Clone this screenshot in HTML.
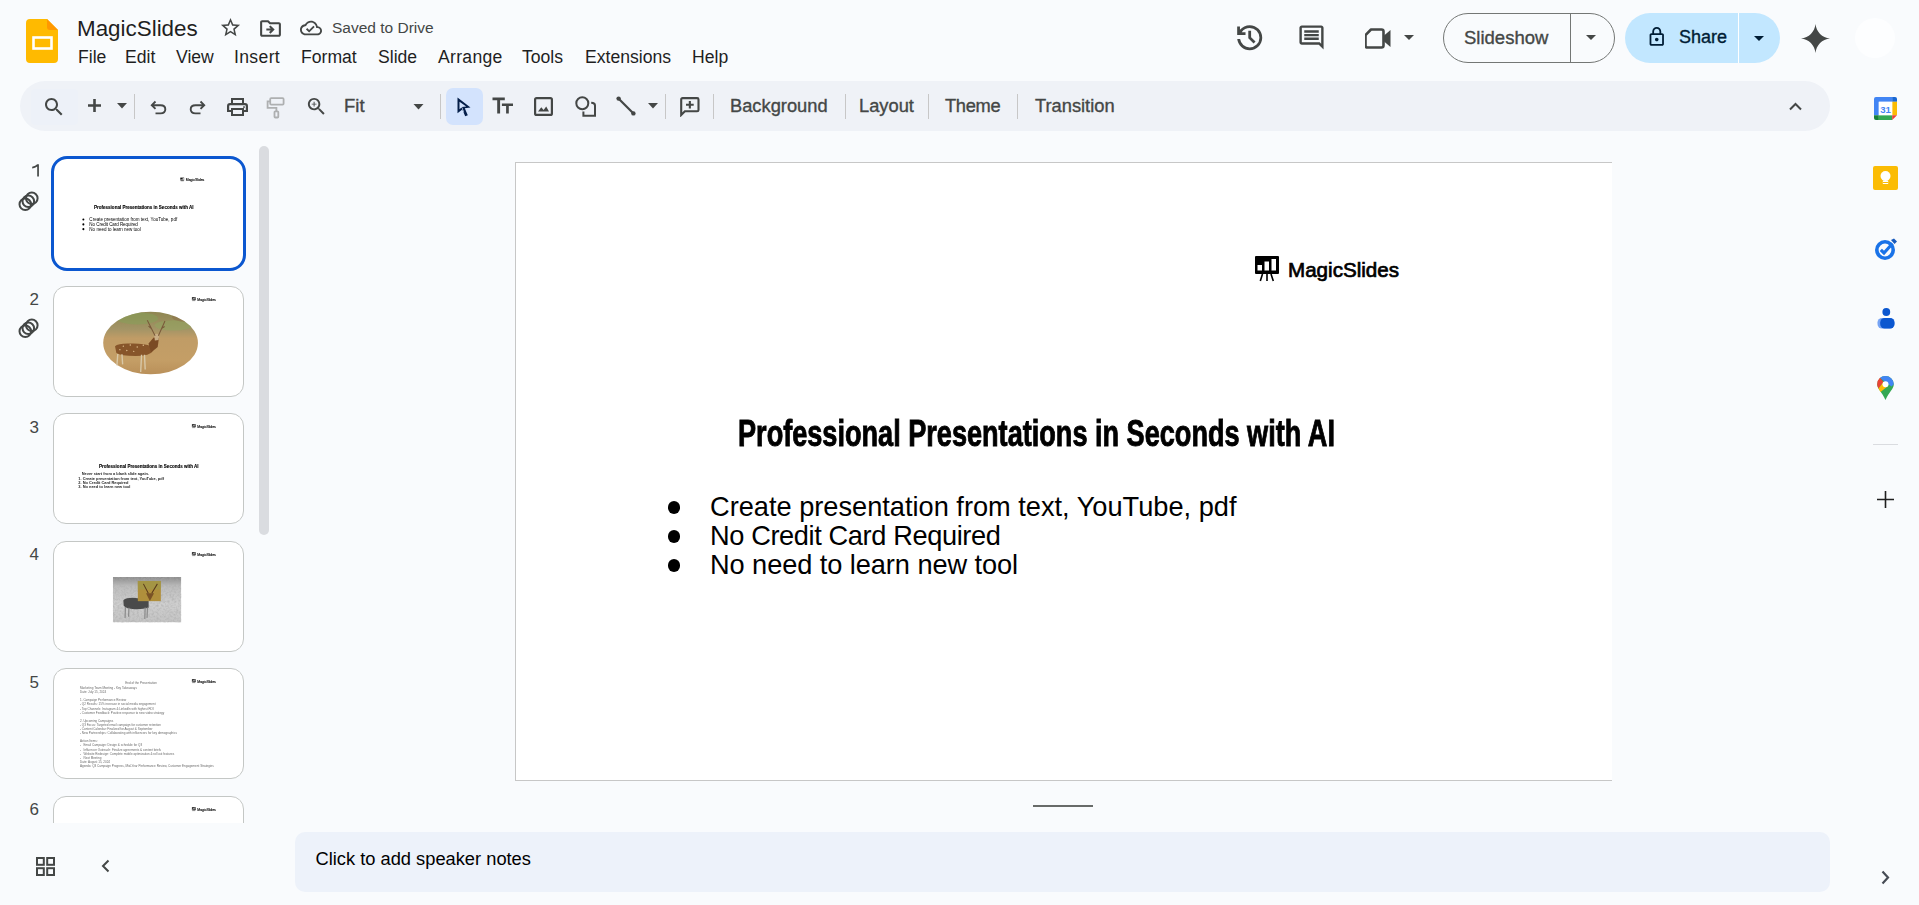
<!DOCTYPE html>
<html><head><meta charset="utf-8">
<style>
*{box-sizing:border-box;margin:0;padding:0}
html,body{width:1919px;height:905px;overflow:hidden;background:#f9fbfd;font-family:"Liberation Sans",sans-serif;color:#1f1f1f}
.a{position:absolute}
.ic{position:absolute;display:block}
.t{position:absolute;white-space:nowrap;line-height:1}
.menu{font-size:17.6px;color:#1f1f1f;margin-top:1px}
.tb{font-size:18.3px;color:#444746;-webkit-text-stroke:0.35px #444746}
.sep{position:absolute;width:1px;background:#c7c7c7}

.num{position:absolute;margin-top:-1.8px;font-size:17px;color:#444746;line-height:1;width:20px;text-align:right}
.thumb{position:absolute;left:53px;width:191px;height:111px;border:1px solid #c4c7c5;border-radius:13px;background:#fff;overflow:hidden}
.slide{position:absolute;left:0;top:0;width:1096px;height:617px;background:#fff;overflow:hidden}
.sc{transform-origin:0 0;transform:scale(0.1668);left:3px;top:3px}
.ttl{position:absolute;left:222px;top:252.7px;font-weight:bold;font-size:36.6px;line-height:1;white-space:nowrap;transform:scaleX(0.741);transform-origin:0 0;color:#000;-webkit-text-stroke:0.9px #000}
.bul{position:absolute;left:150px;top:329px;font-size:27.2px;line-height:29.2px;color:#000;white-space:nowrap}
.bul div{position:relative;padding-left:44px}
.bul div:before{content:"";position:absolute;left:1.5px;top:9px;width:12.5px;height:12.5px;border-radius:50%;background:#000}
.logo{position:absolute;left:738px;top:92px}
.trn{position:absolute;left:18px}
</style></head>
<body>
<!-- ===== HEADER ===== -->
<svg class="ic" style="left:26px;top:19px" width="33" height="44" viewBox="0 0 33 44">
  <path d="M3 0H21L32 11V40Q32 44 28 44H4Q0 44 0 40V4Q0 0 4 0Z" fill="#ffba00"/>
  <path d="M21 0L32 11H24Q21 11 21 8Z" fill="#ff9800"/>
  <rect x="7.5" y="18.5" width="18" height="11" fill="none" stroke="#fff" stroke-width="2.6"/>
</svg>
<div class="t" style="left:77px;top:18px;font-size:22.4px;color:#1f1f1f">MagicSlides</div>

<!-- star -->
<svg class="ic" style="left:219px;top:16px" width="23" height="23" viewBox="0 0 24 24"><path fill="#444746" d="M22 9.24l-7.19-.62L12 2 9.19 8.63 2 9.24l5.46 4.73L5.82 21 12 17.27 18.18 21l-1.63-7.03L22 9.24zM12 15.4l-3.76 2.27 1-4.28-3.32-2.88 4.38-.38L12 6.1l1.71 4.04 4.38.38-3.32 2.88 1 4.28L12 15.4z"/></svg>
<!-- folder move -->
<svg class="ic" style="left:258px;top:16px" width="25" height="25" viewBox="0 0 24 24"><path fill="#444746" d="M20 6h-8l-2-2H4c-1.1 0-1.99.9-1.99 2L2 18c0 1.1.9 2 2 2h16c1.1 0 2-.9 2-2V8c0-1.1-.9-2-2-2zm0 12H4V6h5.17l2 2H20v10zm-7.84-6H8v2h4.16l-1.59 1.59L11.99 17 16 13.01 11.99 9l-1.41 1.41L12.16 12z"/></svg>
<!-- cloud done -->
<svg class="ic" style="left:300px;top:16.8px" width="22" height="22" viewBox="0 0 24 24"><path fill="#444746" d="M19.35 10.04C18.67 6.590 15.64 4 12 4 9.11 4 6.6 5.64 5.35 8.04 2.34 8.36 0 10.91 0 14c0 3.31 2.69 6 6 6h13c2.76 0 5-2.24 5-5 0-2.64-2.050-4.78-4.65-4.960zM19 18H6c-2.21 0-4-1.79-4-4 0-2.05 1.53-3.76 3.56-3.97l1.07-.11.5-.95C8.08 7.14 9.94 6 12 6c2.62 0 4.88 1.86 5.39 4.430l.3 1.5 1.53.11c1.56.1 2.78 1.41 2.78 2.96 0 1.65-1.35 3-3 3zm-9-3.82l-2.09-2.09L6.5 13.5 10 17l6.01-6.01-1.41-1.41z"/></svg>
<div class="t" style="left:332px;top:20px;font-size:15.5px;color:#444746">Saved to Drive</div>

<!-- menu -->
<div class="t menu" style="left:78px;top:48px">File</div>
<div class="t menu" style="left:125px;top:48px">Edit</div>
<div class="t menu" style="left:176px;top:48px">View</div>
<div class="t menu" style="left:234px;top:48px;letter-spacing:0.35px">Insert</div>
<div class="t menu" style="left:301px;top:48px">Format</div>
<div class="t menu" style="left:378px;top:48px">Slide</div>
<div class="t menu" style="left:438px;top:48px;letter-spacing:0.3px">Arrange</div>
<div class="t menu" style="left:522px;top:48px">Tools</div>
<div class="t menu" style="left:585px;top:48px">Extensions</div>
<div class="t menu" style="left:692px;top:48px">Help</div>

<!-- right header -->
<svg class="ic" style="left:1232.8px;top:20.8px" width="33.4" height="33.4" viewBox="0 -960 960 960"><path fill="#444746" d="M480-120q-138 0-240.5-91.5T122-440h82q14 104 92.5 172T480-200q117 0 198.5-81.5T760-480q0-117-81.5-198.5T480-760q-69 0-129 32t-101 88h110v80H120v-240h80v94q51-64 124.5-99T480-840q75 0 140.5 28.5t114 77q48.5 48.5 77 114T840-480q0 75-28.5 140.5t-77 114q-48.5 48.5-114 77T480-120Zm112-192L440-464v-216h80v184l128 128-56 56Z"/></svg>
<svg class="ic" style="left:1297px;top:23px" width="29" height="29" viewBox="0 0 24 24"><path fill="#444746" d="M21.99 4c0-1.1-.89-2-1.99-2H4c-1.1 0-2 .9-2 2v12c0 1.1.9 2 2 2h14l4 4-.01-18zM20 4v13.17L18.83 16H4V4h16zM6 12h12v2H6zm0-3h12v2H6zm0-3h12v2H6z"/></svg>
<svg class="ic" style="left:1365px;top:26px" width="27" height="25" viewBox="1 0 27 25">
  <path d="M7 3.5H17.5Q19.5 3.5 19.5 5.5V19.5Q19.5 21.5 17.5 21.5H3.5Q1.5 21.5 1.5 19.5V9Z" fill="none" stroke="#444746" stroke-width="2.6" stroke-linejoin="round"/>
  <path d="M19.5 10L26.5 4V21L19.5 15Z" fill="#444746"/>
</svg>
<svg class="ic" style="left:1404px;top:35px" width="10" height="5" viewBox="0 0 10 5"><path fill="#444746" d="M0 0H10L5 5Z"/></svg>

<div class="a" style="left:1443px;top:13px;width:172px;height:50px;border:1px solid #747775;border-radius:25px"></div>
<div class="a" style="left:1570px;top:13px;width:1px;height:50px;background:#747775"></div>
<div class="t" style="left:1464px;top:29px;font-size:18.5px;color:#444746;-webkit-text-stroke:0.35px #444746">Slideshow</div>
<svg class="ic" style="left:1586px;top:35px" width="10" height="5" viewBox="0 0 10 5"><path fill="#444746" d="M0 0H10L5 5Z"/></svg>

<div class="a" style="left:1625px;top:13px;width:155px;height:50px;background:#c2e7ff;border-radius:25px"></div>
<div class="a" style="left:1738px;top:13px;width:1px;height:50px;background:#fff"></div>
<svg class="ic" style="left:1646.2px;top:26px" width="21.5" height="21.5" viewBox="0 0 24 24"><path fill="#001d35" d="M18 8h-1V6c0-2.76-2.24-5-5-5S7 3.24 7 6v2H6c-1.1 0-2 .9-2 2v10c0 1.1.9 2 2 2h12c1.1 0 2-.9 2-2V10c0-1.1-.9-2-2-2zM9 6c0-1.66 1.34-3 3-3s3 1.34 3 3v2H9V6zm9 14H6V10h12v10zm-6-3c1.1 0 2-.9 2-2s-.9-2-2-2-2 .9-2 2 .9 2 2 2z"/></svg>
<div class="t" style="left:1679px;top:28px;font-size:18px;color:#001d35;-webkit-text-stroke:0.35px #001d35">Share</div>
<svg class="ic" style="left:1754px;top:36px" width="10" height="5" viewBox="0 0 10 5"><path fill="#001d35" d="M0 0H10L5 5Z"/></svg>

<svg class="ic" style="left:1801px;top:24px" width="29" height="29" viewBox="0 0 24 24"><path fill="#444746" d="M12 0C12.6 6.5 17.5 11.4 24 12C17.5 12.6 12.6 17.5 12 24C11.4 17.5 6.5 12.6 0 12C6.5 11.4 11.4 6.5 12 0Z"/></svg>
<div class="a" style="left:1855px;top:18px;width:40px;height:40px;border-radius:50%;background:#fdfeff"></div>

<!-- ===== TOOLBAR ===== -->
<div class="a" style="left:20px;top:81px;width:1810px;height:50px;background:#eff2f7;border-radius:25px"></div>
<div class="a" style="left:31px;top:89px;width:47px;height:36px;background:#edf1f8;border-radius:4px"></div>

<!-- search -->
<svg class="ic" style="left:42px;top:95px" width="24" height="24" viewBox="0 0 24 24"><path fill="#444746" d="M15.5 14h-.79l-.28-.27C15.41 12.59 16 11.11 16 9.5 16 5.910 13.09 3 9.5 3S3 5.91 3 9.5 5.91 16 9.5 16c1.61 0 3.09-.59 4.23-1.57l.27.28v.79l5 4.99L20.49 19l-4.99-5zm-6 0C7.01 14 5 11.99 5 9.5S7.01 5 9.5 5 14 7.01 14 9.5 11.99 14 9.5 14z"/></svg>
<!-- plus -->
<svg class="ic" style="left:88px;top:99px" width="13" height="13" viewBox="0 0 13 13"><path fill="#444746" d="M5.2 0H7.8V5.2H13V7.8H7.8V13H5.2V7.8H0V5.2H5.2Z"/></svg>
<svg class="ic" style="left:117px;top:103px" width="10" height="6" viewBox="0 0 10 6"><path fill="#444746" d="M0 0H10L5 5.5Z"/></svg>
<div class="sep" style="left:134px;top:94px;height:25px"></div>
<!-- undo -->
<svg class="ic" style="left:150px;top:100px" width="17" height="15" viewBox="0 0 17 15"><path fill="none" stroke="#444746" stroke-width="1.9" d="M5.5 1.5L1.8 5.2L5.5 8.9M1.8 5.2H10.5Q15.3 5.2 15.3 9.3Q15.3 13.4 10.5 13.4H5.5"/></svg>
<!-- redo -->
<svg class="ic" style="left:189px;top:100px" width="17" height="15" viewBox="0 0 17 15"><path fill="none" stroke="#444746" stroke-width="1.9" d="M11.5 1.5L15.2 5.2L11.5 8.9M15.2 5.2H6.5Q1.7 5.2 1.7 9.3Q1.7 13.4 6.5 13.4H11.5"/></svg>
<!-- print -->
<svg class="ic" style="left:227px;top:98px" width="21" height="18" viewBox="0 0 21 18"><path fill="#444746" d="M4 0H17V5H18Q21 5 21 8V14H17V18H4V14H0V8Q0 5 3 5H4ZM6 2V5H15V2ZM2.2 8V12H4V10H17V12H18.8V8Q18.8 7.2 18 7.2H3Q2.2 7.2 2.2 8ZM6 12V16H15V12ZM17 8.2A.9.9 0 1 0 17.01 8.2Z"/></svg>
<!-- paint format (disabled) -->
<svg class="ic" style="left:266px;top:97px" width="19" height="22" viewBox="0 0 19 22"><g fill="none" stroke="#aeb0b1" stroke-width="1.8"><rect x="4.2" y="1.2" width="13.4" height="6.4" rx="1"/><path d="M4.2 4.4H1.6V10.8H10.4V14.3"/><rect x="8.5" y="14.3" width="3.8" height="6.2" rx=".8"/></g></svg>
<!-- zoom -->
<svg class="ic" style="left:305px;top:95px" width="23" height="23" viewBox="0 0 24 24"><path fill="#444746" d="M15.5 14h-.79l-.28-.27C15.41 12.59 16 11.11 16 9.5 16 5.910 13.09 3 9.5 3S3 5.91 3 9.5 5.91 16 9.5 16c1.61 0 3.09-.59 4.23-1.57l.27.28v.79l5 4.99L20.49 19l-4.99-5zm-6 0C7.01 14 5 11.99 5 9.5S7.01 5 9.5 5 14 7.01 14 9.5 11.99 14 9.5 14zm.5-7H9v2H7v1h2v2h1v-2h2V9h-2z"/></svg>
<div class="t tb" style="left:344px;top:97px;font-size:18.5px;color:#444746">Fit</div>
<svg class="ic" style="left:413px;top:104px" width="11" height="6" viewBox="0 0 10 6"><path fill="#444746" d="M0 0H10L5 5.5Z"/></svg>
<div class="sep" style="left:440px;top:94px;height:25px"></div>
<!-- select -->
<div class="a" style="left:446px;top:88px;width:37px;height:37px;background:#d3e3fd;border-radius:7px"></div>
<svg class="ic" style="left:457px;top:97px" width="14" height="20" viewBox="0 0 14 20"><path fill="#041e49" d="M0.5 0.5L13.5 10.5L7.8 11.2L10.8 18.2L8.2 19.3L5.3 12.4L0.5 16.3Z"/><path fill="#d3e3fd" d="M2.5 4.8L9.2 9.6L5 10.1L7.2 15.2L6.7 15.4L4.6 10.5L2.5 12.2Z"/></svg>
<!-- Tt -->
<svg class="ic" style="left:492px;top:97px" width="22" height="17" viewBox="0 0 22 17"><path fill="#444746" d="M0.5 0.5H12.8V3.3H8.1V16.5H5.2V3.3H0.5ZM9.9 6.4H21V9.1H16.8V16.5H14.1V9.1H9.9Z"/></svg>
<!-- image -->
<svg class="ic" style="left:534px;top:97px" width="19" height="19" viewBox="0 0 19 19"><rect x="1.1" y="1.1" width="16.8" height="16.8" rx="1.5" fill="none" stroke="#444746" stroke-width="2.2"/><path fill="#444746" d="M4 14.5L7.3 10.3L9.6 13L12.2 9.5L15 14.5Z"/></svg>
<!-- shapes -->
<svg class="ic" style="left:575px;top:96px" width="22" height="22" viewBox="0 0 22 22"><circle cx="7.3" cy="7.3" r="6" fill="none" stroke="#444746" stroke-width="2"/><path fill="none" stroke="#444746" stroke-width="2" d="M16.2 6.8Q20 6.8 20 9.5V19.8H8.4V15.5"/></svg>
<!-- line -->
<svg class="ic" style="left:616px;top:96px" width="20" height="20" viewBox="0 0 20 20"><path stroke="#444746" stroke-width="2.2" d="M2.5 2.5L17.5 17.5"/><circle cx="2.6" cy="2.6" r="2.2" fill="#444746"/><circle cx="17.4" cy="17.4" r="2.2" fill="#444746"/></svg>
<svg class="ic" style="left:648px;top:103px" width="10" height="6" viewBox="0 0 10 6"><path fill="#444746" d="M0 0H10L5 5.5Z"/></svg>
<div class="sep" style="left:665px;top:94px;height:25px"></div>
<!-- add comment -->
<svg class="ic" style="left:679px;top:97px" width="21" height="20" viewBox="0 0 21 20"><path fill="none" stroke="#444746" stroke-width="2.1" d="M2.2 18V2.5Q2.2 1.1 3.6 1.1H18.1Q19.5 1.1 19.5 2.5V12.9Q19.5 14.3 18.1 14.3H5.9Z"/><path fill="#444746" d="M9.8 3.9H11.9V6.7H14.7V8.8H11.9V11.6H9.8V8.8H7V6.7H9.8Z"/></svg>
<div class="sep" style="left:713px;top:94px;height:25px"></div>
<div class="t tb" style="left:730px;top:97px">Background</div>
<div class="sep" style="left:845px;top:94px;height:25px"></div>
<div class="t tb" style="left:859px;top:97px">Layout</div>
<div class="sep" style="left:928px;top:94px;height:25px"></div>
<div class="t tb" style="left:945px;top:97px;letter-spacing:-0.3px">Theme</div>
<div class="sep" style="left:1017px;top:94px;height:25px"></div>
<div class="t tb" style="left:1035px;top:97px">Transition</div>
<!-- collapse -->
<svg class="ic" style="left:1789px;top:101px" width="13" height="10" viewBox="0 0 13 10"><path fill="none" stroke="#444746" stroke-width="2" d="M1 8.5L6.5 3L12 8.5"/></svg>


<!-- ===== SLIDE CANVAS ===== -->
<div class="a" style="left:515px;top:162px;width:1097px;height:619px;border:1px solid #c7c7c7;border-right:none;background:#fff"></div>
<div class="slide" style="left:516px;top:163px">
  <div class="logo" style="left:738px;top:92px"><svg class="a" style="left:0;top:0" width="26" height="27" viewBox="0 0 26 27"><rect x="1" y="1" width="24" height="18" rx="1" fill="#000"/><rect x="3.5" y="10" width="4.5" height="5.5" fill="#fff"/><rect x="10.5" y="6.5" width="4.5" height="9" fill="#fff"/><rect x="17.5" y="4" width="4.5" height="11.5" fill="#fff"/><path d="M8.5 19L6.3 26M13 19V26M17 19L19.3 26" stroke="#000" stroke-width="1.6"/></svg><div class="t" style="left:34px;top:5px;font-size:20.6px;color:#000;-webkit-text-stroke:0.7px #000">MagicSlides</div></div>
  <div class="ttl">Professional Presentations in Seconds with AI</div>
  <div class="bul"><div>Create presentation from text, YouTube, pdf</div><div style="letter-spacing:-0.38px">No Credit Card Required</div><div style="letter-spacing:-0.07px">No need to learn new tool</div></div>
</div>
<div class="a" style="left:1033px;top:805px;width:60px;height:2px;background:#686b69"></div>

<!-- ===== NOTES ===== -->
<div class="a" style="left:295px;top:832px;width:1535px;height:60px;background:#edf2fa;border-radius:10px"></div>
<div class="t" style="left:315.5px;top:850px;font-size:18.3px;color:#000">Click to add speaker notes</div>

<!-- ===== FILMSTRIP ===== -->
<div class="a" style="left:0;top:145px;width:258px;height:678px;overflow:hidden">
<svg class="ic" style="left:31px;top:19.4px" width="9" height="13" viewBox="0 0 9 13"><path fill="#444746" d="M6.2 0.2H7.9V12.5H6.2V2.6Q4.3 4 1.2 4.4V2.8Q4.6 2.1 6.2 0.2Z"/></svg>
<div class="thumb" style="top:13.0px"><div class="slide sc"><div class="logo"><svg class="a" style="left:0;top:0" width="26" height="27" viewBox="0 0 26 27"><rect x="1" y="1" width="24" height="18" rx="1" fill="#000"/><rect x="3.5" y="10" width="4.5" height="5.5" fill="#fff"/><rect x="10.5" y="6.5" width="4.5" height="9" fill="#fff"/><rect x="17.5" y="4" width="4.5" height="11.5" fill="#fff"/><path d="M8.5 19L6.3 26M13 19V26M17 19L19.3 26" stroke="#000" stroke-width="1.6"/></svg><div class="t" style="left:34px;top:5px;font-size:20.6px;color:#000;-webkit-text-stroke:0.7px #000">MagicSlides</div></div><div class="ttl">Professional Presentations in Seconds with AI</div><div class="bul"><div>Create presentation from text, YouTube, pdf</div><div style="letter-spacing:-0.38px">No Credit Card Required</div><div style="letter-spacing:-0.07px">No need to learn new tool</div></div></div></div>
<div class="num" style="left:19px;top:148.0px">2</div>
<div class="thumb" style="top:140.5px"><div class="slide sc"><div class="logo" style="left:807px;top:42px"><svg class="a" style="left:0;top:0" width="26" height="27" viewBox="0 0 26 27"><rect x="1" y="1" width="24" height="18" rx="1" fill="#000"/><rect x="3.5" y="10" width="4.5" height="5.5" fill="#fff"/><rect x="10.5" y="6.5" width="4.5" height="9" fill="#fff"/><rect x="17.5" y="4" width="4.5" height="11.5" fill="#fff"/><path d="M8.5 19L6.3 26M13 19V26M17 19L19.3 26" stroke="#000" stroke-width="1.6"/></svg><div class="t" style="left:34px;top:5px;font-size:20.6px;color:#000;-webkit-text-stroke:0.7px #000">MagicSlides</div></div><svg class="a" style="left:0;top:0" width="1096" height="617" viewBox="0 0 1096 617">
<g transform="translate(561 318) scale(1.04) translate(-557 -317)">
<defs><clipPath id="ov"><ellipse cx="557" cy="317" rx="273" ry="180"/></clipPath>
<linearGradient id="gr" x1="0" y1="0" x2="0" y2="1"><stop offset="0" stop-color="#8d8550"/><stop offset=".28" stop-color="#a39466"/><stop offset=".42" stop-color="#c09c66"/><stop offset=".75" stop-color="#c49e66"/><stop offset="1" stop-color="#b88e58"/></linearGradient></defs>
<g clip-path="url(#ov)">
<rect x="280" y="130" width="560" height="380" fill="url(#gr)"/>
<ellipse cx="480" cy="175" rx="120" ry="35" fill="#86a05a" opacity=".55"/>
<ellipse cx="690" cy="215" rx="110" ry="30" fill="#8fa860" opacity=".5"/>
<ellipse cx="760" cy="165" rx="80" ry="30" fill="#8a6a48" opacity=".45"/>
</g>
<path d="M352 335Q370 318 440 320Q520 318 560 335L572 360Q555 392 470 392Q385 392 360 375Z" fill="#87552a"/>
<path d="M545 320L575 285L605 290L598 340L560 372Z" fill="#7a4a24"/>
<path d="M578 270Q592 258 606 270L603 300L582 302Z" fill="#c9ae86"/>
<path d="M583 275L538 185M602 275L640 190M560 232L545 220M622 232L638 222" stroke="#7a5a3a" stroke-width="6" fill="none"/>
<path d="M505 385L500 484M522 385L526 470M368 380L363 446M392 382L396 440" stroke="#d8c8a8" stroke-width="8"/>
<g fill="#e0c090"><circle cx="400" cy="335" r="4"/><circle cx="440" cy="328" r="4"/><circle cx="480" cy="340" r="4"/><circle cx="420" cy="360" r="4"/><circle cx="515" cy="330" r="4"/><circle cx="460" cy="365" r="4"/><circle cx="380" cy="355" r="4"/></g>
</g></svg></div></div>
<div class="num" style="left:19px;top:275.5px">3</div>
<div class="thumb" style="top:268.0px"><div class="slide sc"><div class="logo" style="left:807px;top:42px"><svg class="a" style="left:0;top:0" width="26" height="27" viewBox="0 0 26 27"><rect x="1" y="1" width="24" height="18" rx="1" fill="#000"/><rect x="3.5" y="10" width="4.5" height="5.5" fill="#fff"/><rect x="10.5" y="6.5" width="4.5" height="9" fill="#fff"/><rect x="17.5" y="4" width="4.5" height="11.5" fill="#fff"/><path d="M8.5 19L6.3 26M13 19V26M17 19L19.3 26" stroke="#000" stroke-width="1.6"/></svg><div class="t" style="left:34px;top:5px;font-size:20.6px;color:#000;-webkit-text-stroke:0.7px #000">MagicSlides</div></div><div class="ttl" style="top:276px;left:252px">Professional Presentations in Seconds with AI</div><div class="a" style="left:148px;top:328px;font-size:23.5px;font-weight:bold;white-space:nowrap;line-height:1">Never start from a blank slide again.</div><div class="a" style="left:128px;top:362px;font-size:23.5px;line-height:21.7px;font-weight:bold;white-space:nowrap">1. Create presentation from text, YouTube, pdf<br>2. No Credit Card Required<br>3. No need to learn new tool</div></div></div>
<div class="num" style="left:19px;top:403.0px">4</div>
<div class="thumb" style="top:395.5px"><div class="slide sc"><div class="logo" style="left:807px;top:42px"><svg class="a" style="left:0;top:0" width="26" height="27" viewBox="0 0 26 27"><rect x="1" y="1" width="24" height="18" rx="1" fill="#000"/><rect x="3.5" y="10" width="4.5" height="5.5" fill="#fff"/><rect x="10.5" y="6.5" width="4.5" height="9" fill="#fff"/><rect x="17.5" y="4" width="4.5" height="11.5" fill="#fff"/><path d="M8.5 19L6.3 26M13 19V26M17 19L19.3 26" stroke="#000" stroke-width="1.6"/></svg><div class="t" style="left:34px;top:5px;font-size:20.6px;color:#000;-webkit-text-stroke:0.7px #000">MagicSlides</div></div><svg class="a" style="left:335px;top:192px" width="410" height="272" viewBox="0 0 392 265" preserveAspectRatio="none">
<defs><linearGradient id="g4" x1="0" y1="0" x2="0" y2="1"><stop offset="0" stop-color="#8a8a8a"/><stop offset=".2" stop-color="#bdbdbd"/><stop offset=".6" stop-color="#cfcfcf"/><stop offset="1" stop-color="#c4c4c4"/></linearGradient>
<filter id="nz"><feTurbulence type="fractalNoise" baseFrequency=".08" numOctaves="2" seed="3"/><feColorMatrix values="0 0 0 0 .4  0 0 0 0 .4  0 0 0 0 .4  0 0 0 1.2 -.45"/></filter></defs>
<rect width="392" height="265" fill="url(#g4)"/>
<rect width="392" height="265" filter="url(#nz)"/>
<path d="M60 135Q80 118 130 122Q180 126 205 140L205 180Q170 190 125 188Q75 186 62 168Z" fill="#4a4a4a"/>
<path d="M72 175L70 240M92 180L90 232M185 178L183 245M198 178L196 238" stroke="#8a8a8a" stroke-width="7"/>
<rect x="143" y="23" width="132" height="118" fill="#b08f3c"/>
<rect x="143" y="23" width="132" height="50" fill="#9c9a4a" opacity=".6"/>
<path d="M190 95L212 140L236 95Z" fill="#7a5226"/>
<path d="M203 95L175 40M223 95L255 40" stroke="#5a3a1c" stroke-width="6"/>
</svg></div></div>
<div class="num" style="left:19px;top:530.5px">5</div>
<div class="thumb" style="top:523.0px"><div class="slide sc"><div class="logo" style="left:807px;top:42px"><svg class="a" style="left:0;top:0" width="26" height="27" viewBox="0 0 26 27"><rect x="1" y="1" width="24" height="18" rx="1" fill="#000"/><rect x="3.5" y="10" width="4.5" height="5.5" fill="#fff"/><rect x="10.5" y="6.5" width="4.5" height="9" fill="#fff"/><rect x="17.5" y="4" width="4.5" height="11.5" fill="#fff"/><path d="M8.5 19L6.3 26M13 19V26M17 19L19.3 26" stroke="#000" stroke-width="1.6"/></svg><div class="t" style="left:34px;top:5px;font-size:20.6px;color:#000;-webkit-text-stroke:0.7px #000">MagicSlides</div></div><div class="a" style="left:404px;top:53px;width:200px;text-align:center;font-size:18.2px;line-height:24px;color:#6a6a6a;white-space:nowrap">End of the Presentation</div><div class="a" style="left:138px;top:83.7px;font-size:18.2px;line-height:24.6px;color:#6a6a6a;white-space:nowrap">Marketing Team Meeting - Key Takeaways<br>Date: July 15, 2024<br><br>1. Campaign Performance Review<br>- Q2 Results: 15% increase in social media engagement<br>- Top Channels: Instagram &amp; LinkedIn with highest ROI<br>- Customer Feedback: Positive response to new video strategy<br><br>2. Upcoming Campaigns<br>- Q3 Focus: Targeted email campaign for customer retention<br>- Content Calendar: Finalized for August &amp; September<br>- New Partnerships: Collaborating with influencers for key demographics<br><br>Action Items:<br>-&nbsp;&nbsp; Email Campaign: Design &amp; schedule for Q3<br>-&nbsp;&nbsp; Influencer Outreach: Finalize agreements &amp; content briefs<br>-&nbsp;&nbsp; Website Redesign: Complete mobile optimization &amp; roll out features<br>-&nbsp;&nbsp; Next Meeting<br>Date: August 15, 2024<br>Agenda: Q3 Campaign Progress, Mid-Year Performance Review, Customer Engagement Strategies</div></div></div>
<div class="num" style="left:19px;top:658.0px">6</div>
<div class="thumb" style="top:650.5px"><div class="slide sc"><div class="logo" style="left:807px;top:42px"><svg class="a" style="left:0;top:0" width="26" height="27" viewBox="0 0 26 27"><rect x="1" y="1" width="24" height="18" rx="1" fill="#000"/><rect x="3.5" y="10" width="4.5" height="5.5" fill="#fff"/><rect x="10.5" y="6.5" width="4.5" height="9" fill="#fff"/><rect x="17.5" y="4" width="4.5" height="11.5" fill="#fff"/><path d="M8.5 19L6.3 26M13 19V26M17 19L19.3 26" stroke="#000" stroke-width="1.6"/></svg><div class="t" style="left:34px;top:5px;font-size:20.6px;color:#000;-webkit-text-stroke:0.7px #000">MagicSlides</div></div></div></div>
<svg class="ic trn" style="top:46px" width="22" height="21" viewBox="0 0 22 21"><g fill="none" stroke="#444746" stroke-width="2"><circle cx="7.3" cy="13.3" r="5.8"/><circle cx="10.3" cy="10.3" r="5.8"/><circle cx="13.8" cy="7.3" r="5.8"/></g></svg><svg class="ic trn" style="top:173px" width="22" height="21" viewBox="0 0 22 21"><g fill="none" stroke="#444746" stroke-width="2"><circle cx="7.3" cy="13.3" r="5.8"/><circle cx="10.3" cy="10.3" r="5.8"/><circle cx="13.8" cy="7.3" r="5.8"/></g></svg>
<div class="a" style="left:51px;top:10.7px;width:195px;height:115px;border:3px solid #0b57d0;border-radius:16px"></div>
</div>
<div class="a" style="left:259px;top:146px;width:10px;height:389px;background:#dadce0;border-radius:5px"></div>

<!-- bottom left -->
<svg class="ic" style="left:36px;top:857px" width="19" height="19" viewBox="0 0 19 19"><g fill="none" stroke="#444746" stroke-width="2"><rect x="1" y="1" width="6.8" height="6.8"/><rect x="11.2" y="1" width="6.8" height="6.8"/><rect x="1" y="11.2" width="6.8" height="6.8"/><rect x="11.2" y="11.2" width="6.8" height="6.8"/></g></svg>
<svg class="ic" style="left:100px;top:859px" width="11" height="14" viewBox="0 0 11 14"><path fill="none" stroke="#444746" stroke-width="2" d="M8.5 1.5L3 7L8.5 12.5"/></svg>

<!-- ===== RIGHT SIDEBAR ===== -->
<svg class="ic" style="left:1873.8px;top:97px" width="23" height="23" viewBox="0 0 24 24">
 <path d="M0 2Q0 0 2 0H19V5H5V19H0Z" fill="#4285f4"/>
 <path d="M19 0H22Q24 0 24 2V5H19Z" fill="#1967d2"/>
 <path d="M19 5H24V19H19Z" fill="#fbbc04"/>
 <path d="M5 19H19V24H5Z" fill="#34a853"/>
 <path d="M0 19H5V24H2Q0 24 0 22Z" fill="#188038"/>
 <path d="M19 19H24L19 24Z" fill="#ea4335"/>
 <rect x="5" y="5" width="14" height="14" fill="#fff"/>
 <text x="12" y="16.2" font-size="10" font-weight="bold" font-family="Liberation Sans" fill="#4285f4" text-anchor="middle">31</text>
</svg>
<svg class="ic" style="left:1873px;top:166px" width="25" height="24" viewBox="0 0 25 24"><rect x="0" y="0" width="25" height="24" rx="2" fill="#fbbc04"/><circle cx="12.5" cy="10" r="5" fill="#fff"/><rect x="9.8" y="14.5" width="5.4" height="3.5" fill="#fff"/><rect x="9.8" y="16" width="5.4" height="1" fill="#fbbc04"/></svg>
<svg class="ic" style="left:1874px;top:237px" width="24" height="24" viewBox="0 0 24 24"><circle cx="11" cy="13" r="8.2" fill="none" stroke="#1a73e8" stroke-width="3.6"/><path d="M6.8 12.8L10 16L18.5 6.5" fill="none" stroke="#1a73e8" stroke-width="3.2"/><path d="M17 3L20 1.5L23 4.5L20.5 7Z" fill="#185abc"/></svg>
<svg class="ic" style="left:1877px;top:307.8px" width="18" height="21" viewBox="0 0 18 21"><circle cx="9.3" cy="4" r="3.9" fill="#0b57d0"/><rect x="0.5" y="10" width="17" height="10.5" rx="4.5" fill="#4a86f0" opacity=".75"/><rect x="3.2" y="10" width="14.3" height="10.5" rx="4.5" fill="#0b57d0"/></svg>
<svg class="ic" style="left:1877px;top:376px" width="17" height="24" viewBox="0 0 17 24">
 <path d="M8.5 0A8.3 8.3 0 0 1 16.8 8.3C16.8 13 12 16 8.5 24C5 16 0.2 13 0.2 8.3A8.3 8.3 0 0 1 8.5 0Z" fill="#34a853"/>
 <path d="M8.5 0A8.3 8.3 0 0 1 16.8 8.3L14.5 10.5L5 3.5L3 1.8A8.3 8.3 0 0 1 8.5 0Z" fill="#4285f4"/>
 <path d="M3 1.8L6.5 6L1.5 12.5C0.7 11 0.2 9.8 0.2 8.3A8.3 8.3 0 0 1 3 1.8Z" fill="#ea4335"/>
 <path d="M1.5 12.5L6.5 6L11 10L3.5 16Z" fill="#fbbc04"/>
 <circle cx="8.5" cy="8.3" r="3" fill="#fff"/>
</svg>
<div class="a" style="left:1873px;top:444px;width:25px;height:1px;background:#dadce0"></div>
<svg class="ic" style="left:1877px;top:491px" width="17" height="17" viewBox="0 0 17 17"><path fill="#1f1f1f" d="M7.7 0H9.3V7.7H17V9.3H9.3V17H7.7V9.3H0V7.7H7.7Z"/></svg>
<svg class="ic" style="left:1880px;top:870px" width="11" height="15" viewBox="0 0 11 15"><path fill="none" stroke="#474c55" stroke-width="2.2" d="M2.5 1.5L8 7.5L2.5 13.5"/></svg>

</body></html>
